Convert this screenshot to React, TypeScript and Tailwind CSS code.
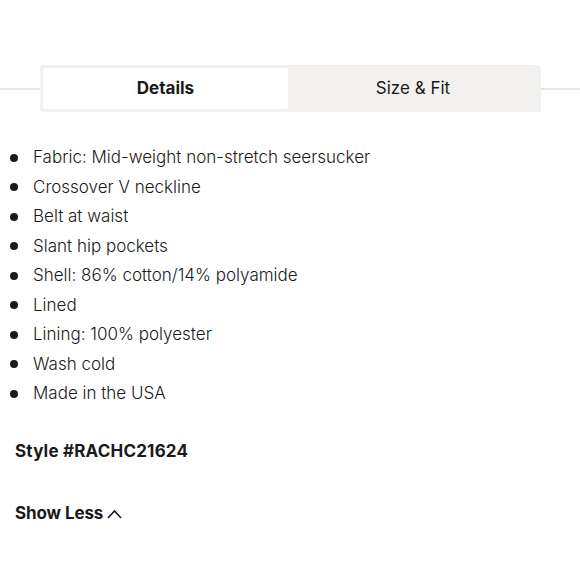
import React from "react";

const items = [
  "Fabric: Mid-weight non-stretch seersucker",
  "Crossover V neckline",
  "Belt at waist",
  "Slant hip pockets",
  "Shell: 86% cotton/14% polyamide",
  "Lined",
  "Lining: 100% polyester",
  "Wash cold",
  "Made in the USA",
];

export default function App() {
  return (
    <div className="w-[580px] h-[580px] bg-white text-[#1a1a1a] overflow-hidden" style={{ fontFamily: "Inter, 'Liberation Sans', sans-serif" }}>
      <div className="relative pt-[65px]">
        <div className="absolute left-0 right-0 top-[88px] h-[2px] bg-[#e6e6e6]" />
        <div className="relative ml-[40px] w-[501px] h-[47px] bg-[#f2f1f0] rounded-[3px] p-[3px] flex">
          <div className="w-[245px] h-full bg-white rounded-[3px] flex items-center justify-center text-[17px] font-bold">Details</div>
          <div className="flex-1 h-full flex items-center justify-center text-[17px] font-normal">Size &amp; Fit</div>
        </div>
      </div>
      <ul className="mt-[31px] pl-[10px]">
        {items.map((t) => (
          <li key={t} className="flex items-center h-[29.5px] text-[17px] font-light text-[#1a1a1a]">
            <span className="w-[8px] h-[8px] rounded-full bg-[#1a1a1a] mr-[15px]" />
            {t}
          </li>
        ))}
      </ul>
      <div className="ml-[15px] mt-[30px] text-[17px] font-bold tracking-[0.2px]">Style #RACHC21624</div>
      <div className="ml-[15px] mt-[37px] text-[17px] font-bold flex items-center gap-[4px] tracking-[-0.1px]">
        Show Less
        <svg width="15" height="10" viewBox="0 0 15 10" fill="none" stroke="#1a1a1a" strokeWidth="1.6">
          <path d="M1 9 L7.5 2 L14 9" />
        </svg>
      </div>
    </div>
  );
}
